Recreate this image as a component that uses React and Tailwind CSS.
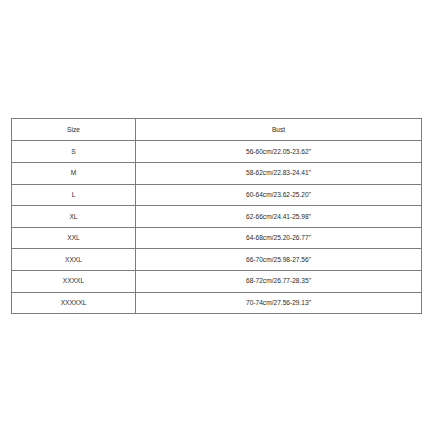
export default function App() {
  const rows = [
    ["S", "56-60cm/22.05-23.62\""],
    ["M", "58-62cm/22.83-24.41\""],
    ["L", "60-64cm/23.62-25.20\""],
    ["XL", "62-66cm/24.41-25.98\""],
    ["XXL", "64-68cm/25.20-26.77\""],
    ["XXXL", "66-70cm/25.98-27.56\""],
    ["XXXXL", "68-72cm/26.77-28.35\""],
    ["XXXXXL", "70-74cm/27.56-29.13\""],
  ];
  return (
    <div className="w-[433px] h-[433px] bg-white pt-[118px] pl-[11px]" style={{ fontFamily: '"Liberation Sans", Arial, sans-serif' }}>
      <div className="w-[411px] border border-[#7c7c7c] flex flex-col text-[6.6px] text-[#2a2a2a]">
        <div className="flex h-[21.4px]">
          <div className="w-[123px] flex items-center justify-center">Size</div>
          <div className="flex-1 border-l border-[#7c7c7c] flex items-center justify-center">Bust</div>
        </div>
        {rows.map(([s, b]) => (
          <div key={s} className="flex h-[21.6px] border-t border-[#7c7c7c]">
            <div className="w-[123px] flex items-center justify-center">{s}</div>
            <div className="flex-1 border-l border-[#7c7c7c] flex items-center justify-center">{b}</div>
          </div>
        ))}
      </div>
    </div>
  );
}
